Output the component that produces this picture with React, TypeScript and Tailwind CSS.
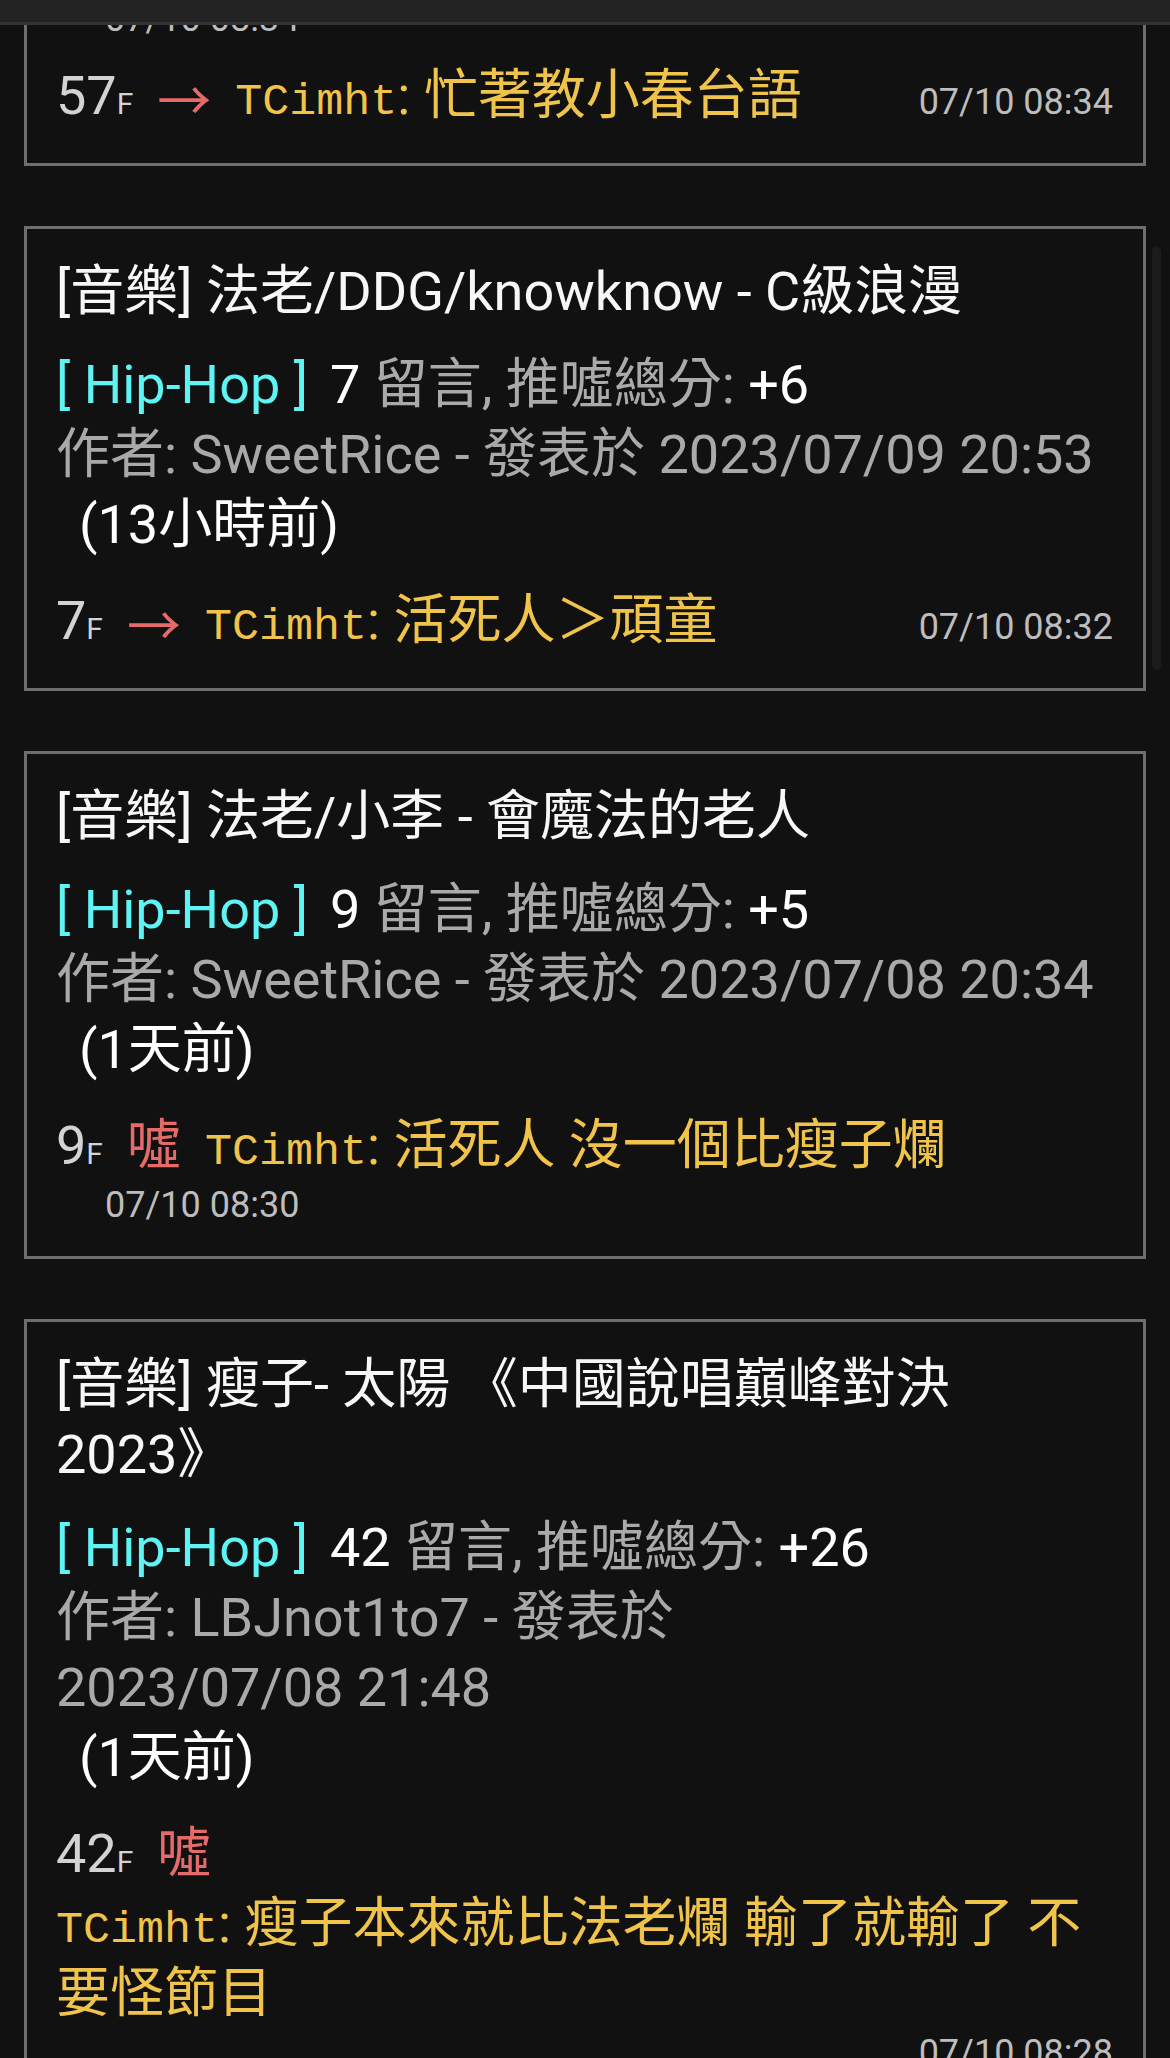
import React from "react";

const SANS = "[font-family:Roboto,'Noto_Sans_CJK_TC',sans-serif]";
const MONO = "[font-family:'Liberation_Mono','Courier_New',monospace]";
const CJK = "[font-family:'Noto_Sans_CJK_TC',Roboto,sans-serif]";

function Card({ children, first }: { children: React.ReactNode; first?: boolean }) {
  return (
    <div
      className={
        first
          ? "border-[3px] border-t-0 border-[#6e6e6e] pl-[29px] pr-[30px] pt-0 pb-[32px]"
          : "border-[3px] border-[#6e6e6e] pl-[29px] pr-[30px] pt-[28px] pb-[32px]"
      }
    >
      {children}
    </div>
  );
}

function Title({ text }: { text: string }) {
  return <div className="text-[54px] leading-[70px] text-[#f7f7f7]">{text}</div>;
}

function Meta({
  count,
  score,
  author,
  date,
  rel,
  dateOwnLine,
}: {
  count: string;
  score: string;
  author: string;
  date: string;
  rel: string;
  dateOwnLine?: boolean;
}) {
  return (
    <div className="mt-[23px] text-[54px] leading-[70px]">
      <div>
        <span className="text-[#5ff4f4]">[ Hip-Hop ]</span>
        <span className="ml-[22px] text-[#ffffff]">{count}</span>
        <span className="text-[#aaaaaa]"> 留言, 推噓總分: </span>
        <span className="text-[#ffffff]">{score}</span>
      </div>
      {dateOwnLine ? (
        <>
          <div className="text-[#a9a9a9]">作者: {author} - 發表於</div>
          <div className="text-[#a9a9a9] whitespace-nowrap">{date}</div>
        </>
      ) : (
        <div className="text-[#a9a9a9] whitespace-nowrap">
          作者: {author} - 發表於 {date}
        </div>
      )}
      <div className="pl-[23px] text-[#ffffff]">({rel})</div>
    </div>
  );
}

function Floor({ n }: { n: string }) {
  return (
    <span className="text-[54px] text-[#d3d3d3]">
      {n}
      <span className="text-[30px] leading-none">F</span>
    </span>
  );
}

function Tag({ t }: { t: "arrow" | "boo" }) {
  return t === "arrow" ? (
    <span className={`inline-block mx-[24px] align-[-7px] text-[54px] leading-none text-[#e66a6a] ${CJK}`}>→</span>
  ) : (
    <span className={`inline-block mx-[24px] text-[54px] leading-none text-[#e66a6a] ${CJK}`}>噓</span>
  );
}

function User({ content }: { content: string }) {
  return (
    <>
      <span className={`${MONO} text-[45px] leading-none font-normal text-[#f0c34b]`}>TCimht</span>
      <span className="text-[#f0c34b]">: {content}</span>
    </>
  );
}

function DateText({ d }: { d: string }) {
  return <span className="text-[36px] leading-[38px] text-[#bdbdbd] whitespace-nowrap">{d}</span>;
}

function PushInline({ floor, tag, content, date }: { floor: string; tag: "arrow" | "boo"; content: string; date: string }) {
  return (
    <div className="mt-[26px] flex items-baseline">
      <div className="text-[54px] leading-[70px] min-w-0">
        <Floor n={floor} />
        <Tag t={tag} />
        <User content={content} />
      </div>
      <div className="ml-auto shrink-0 pl-[20px]">
        <DateText d={date} />
      </div>
    </div>
  );
}

export default function App() {
  return (
    <div className={`relative w-[1170px] h-[2058px] overflow-hidden bg-[#111111] ${SANS}`}>
      <div className="h-[25px] bg-[#222222] border-b-[3px] border-[#333333]" />
      <div className="h-[2033px] overflow-hidden">
        <div className="-mt-[25px] px-[24px] flex flex-col gap-[60px]">
          {/* Card 1 (scrolled partially out of view) */}
          <Card first>
            <div className="pl-[49px] text-[36px] leading-[38px] text-[#bdbdbd]">07/10 08:34</div>
            <div className="mt-[23px] flex items-baseline">
              <div className="text-[54px] leading-[70px] min-w-0">
                <Floor n="57" />
                <Tag t="arrow" />
                <User content="忙著教小春台語" />
              </div>
              <div className="ml-auto shrink-0 pl-[20px]">
                <DateText d="07/10 08:34" />
              </div>
            </div>
          </Card>

          {/* Card 2 */}
          <Card>
            <Title text="[音樂] 法老/DDG/knowknow - C級浪漫" />
            <Meta count="7" score="+6" author="SweetRice" date="2023/07/09 20:53" rel="13小時前" />
            <PushInline floor="7" tag="arrow" content="活死人＞頑童" date="07/10 08:32" />
          </Card>

          {/* Card 3 */}
          <Card>
            <Title text="[音樂] 法老/小李 - 會魔法的老人" />
            <Meta count="9" score="+5" author="SweetRice" date="2023/07/08 20:34" rel="1天前" />
            <div className="mt-[26px] text-[54px] leading-[70px]">
              <Floor n="9" />
              <Tag t="boo" />
              <User content="活死人 沒一個比瘦子爛" />
            </div>
            <div className="mt-[5px] pl-[49px] text-[36px] leading-[38px] text-[#bdbdbd]">07/10 08:30</div>
          </Card>

          {/* Card 4 */}
          <Card>
            <div className="text-[54px] leading-[70px] text-[#f7f7f7]">
              [音樂] 瘦子- 太陽 《中國說唱巔峰對決
              <br />
              2023》
            </div>
            <Meta count="42" score="+26" author="LBJnot1to7" date="2023/07/08 21:48" rel="1天前" dateOwnLine />
            <div className="mt-[26px] text-[54px] leading-[70px]">
              <div>
                <Floor n="42" />
                <Tag t="boo" />
              </div>
              <div>
                <User content="瘦子本來就比法老爛 輸了就輸了 不要怪節目" />
              </div>
            </div>
            <div className="mt-[5px] text-right text-[36px] leading-[38px] text-[#bdbdbd]">07/10 08:28</div>
          </Card>
        </div>
      </div>
      {/* scrollbar thumb overlay */}
      <div className="absolute left-[1152px] top-[247px] w-[9px] h-[423px] rounded-full bg-[#1c1c1c]" />
    </div>
  );
}
